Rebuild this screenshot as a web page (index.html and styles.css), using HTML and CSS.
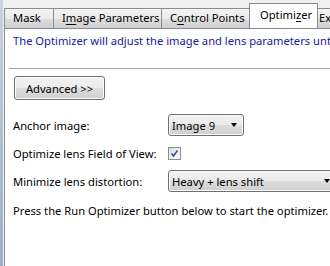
FILE: index.html
```html
<!DOCTYPE html>
<html>
<head>
<meta charset="utf-8">
<link rel="stylesheet" href="styles.css">
</head>
<body>
<div class="window">
  <div class="frame"></div>
  <div class="main">
    <div class="tabs">
      <div class="tab tab-mask">Mask</div>
      <div class="tab tab-img">I<u>m</u>age Parameters</div>
      <div class="tab tab-cp">C<u>o</u>ntrol Points</div>
      <div class="tab tab-opt active">Optimi<u>z</u>er</div>
      <div class="tab tab-ex">Exposure</div>
    </div>
    <div class="panel">
      <p class="intro">The Optimizer will adjust the image and lens parameters until the control points match.</p>
      <div class="sep"></div>
      <button class="btn">Advanced &gt;&gt;</button>
      <div class="form">
        <div class="label">Anchor image:</div>
        <div class="select small"><span>Image 9</span><span class="arrow"></span></div>
        <div class="label">Optimize lens Field of View:</div>
        <div class="check-cell"><span class="check"><svg width="9" height="9" viewBox="0 0 9 9"><path d="M1.5 4.5 L3.5 7 L7.5 1.5" fill="none" stroke="#3a4f9a" stroke-width="1.6"/></svg></span></div>
        <div class="label">Minimize lens distortion:</div>
        <div class="select wide"><span>Heavy + lens shift</span><span class="arrow"></span></div>
      </div>
      <p class="note">Press the Run Optimizer button below to start the optimizer.</p>
    </div>
  </div>
</div>
</body>
</html>
```
FILE: styles.css
```css
html, body {
  margin: 0;
  padding: 0;
  width: 330px;
  height: 266px;
  overflow: hidden;
  background: #ffffff;
  font-family: "Noto Sans", "Open Sans", sans-serif;
  font-size: 11.2px;
  color: #000;
}
.window {
  display: flex;
  height: 266px;
}
.frame {
  width: 3px;
  flex: none;
  background: linear-gradient(#c9d3de, #aebccb 60%, #9fb0c2);
  border-right: 1px solid #eef2f6;
}
.main {
  flex: 1;
  display: flex;
  flex-direction: column;
  min-width: 0;
  background: #f0f0f0;
}
.tabs {
  display: flex;
  align-items: flex-end;
  height: 28px;
  padding-left: 0;
  white-space: nowrap;
  overflow: hidden;
  position: relative;
  z-index: 1;
}
.tab {
  flex: none;
  height: 19px;
  line-height: 18px;
  padding: 0 0 0 8px;
  border: 1px solid #898c95;
  border-bottom: none;
  margin-right: -1px;
  overflow: hidden;
  background: linear-gradient(#f3f3f3, #ebebeb 50%, #dddddd 51%, #cfcfcf);
  box-sizing: content-box;
}
.tab u { text-decoration: underline; text-underline-offset: 2px; }
.tab-mask { width: 40px; }
.tab-img { width: 99px; }
.tab-cp { width: 79px; }
.tab.active {
  background: #ffffff;
  height: 24px;
  line-height: 21px;
  border-bottom: 1px solid #fff;
  margin-bottom: -1px;
  padding-left: 10px;
  width: 57px;
}
.tab-ex { width: 40px; padding-left: 1px; }
.panel {
  flex: 1;
  background: #ffffff;
  border-left: 1px solid #898c95;
  border-top: 1px solid #898c95;
  padding: 3px 0 0 8px;
}
.intro {
  margin: 0;
  color: #20209a;
  white-space: nowrap;
  line-height: 18px;
}
.sep {
  margin: 18px 0 0 -4px;
  border-top: 1px solid #a0a0a0;
}
.btn {
  display: block;
  margin: 7px 0 0 1px;
  width: 91px;
  height: 24px;
  font: inherit;
  color: #000;
  border: 1px solid #707070;
  border-radius: 3px;
  background: linear-gradient(#f2f2f2, #ebebeb 50%, #dddddd 51%, #cfcfcf);
  box-shadow: inset 0 0 0 1px #fcfcfc;
  padding: 0;
}
.form {
  display: grid;
  grid-template-columns: 155px 1fr;
  grid-auto-rows: 28px;
  align-items: center;
  margin-top: 11px;
  white-space: nowrap;
}
.select {
  display: flex;
  align-items: center;
  justify-content: space-between;
  height: 20px;
  padding: 0 6px 0 3px;
  border: 1px solid #707070;
  border-radius: 3px;
  background: linear-gradient(#f2f2f2, #ebebeb 50%, #dddddd 51%, #cfcfcf);
  box-shadow: inset 0 0 0 1px #fcfcfc;
}
.select.small { width: 65px; }
.select.wide { width: 158px; }
.arrow {
  width: 0;
  height: 0;
  border-left: 3.5px solid transparent;
  border-right: 3.5px solid transparent;
  border-top: 4px solid #000;
}
.check-cell { display: flex; align-items: center; }
.check {
  width: 11px;
  height: 11px;
  border: 1px solid #8e8f8f;
  background: linear-gradient(135deg, #dcdcdc, #fbfbfb);
  display: flex;
  align-items: center;
  justify-content: center;
}
.note {
  margin: 8px 0 0 0;
  white-space: nowrap;
}
```
